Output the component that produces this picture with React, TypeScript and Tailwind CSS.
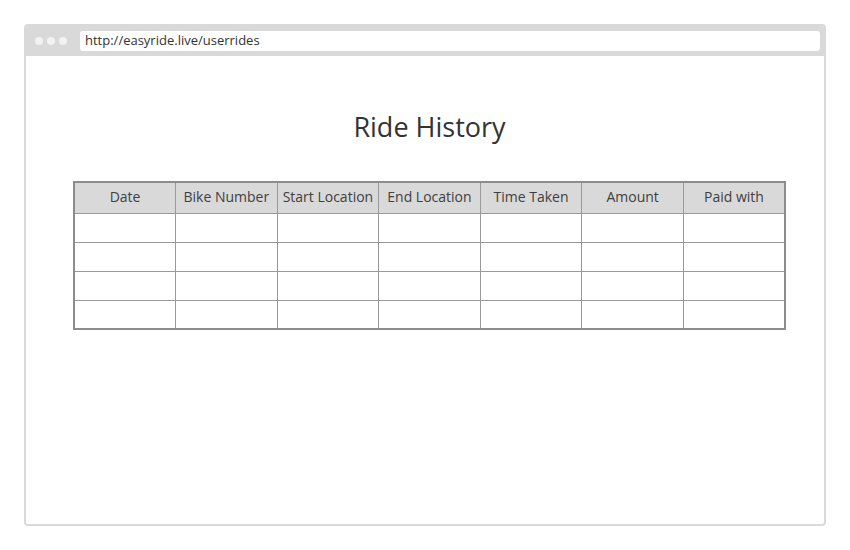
const COLUMNS = ["Date", "Bike Number", "Start Location", "End Location", "Time Taken", "Amount", "Paid with"];
const ROWS = [0, 1, 2, 3];

export default function App() {
  return (
    <div className="w-[850px] h-[550px] bg-white pt-[24px] pl-[24px] font-['Open_Sans','Noto_Sans',sans-serif]">
      {/* Browser frame */}
      <div className="w-[802px] h-[502px] rounded-[4px] border-2 border-[#d9d9d9] bg-white overflow-hidden flex flex-col">
        {/* Top bar */}
        <div className="h-[30px] bg-[#d9d9d9] flex items-center pl-[9px] pr-[4px] gap-[4px]">
          <span className="w-[8px] h-[8px] rounded-full bg-[#f2f2f2]" />
          <span className="w-[8px] h-[8px] rounded-full bg-[#f2f2f2]" />
          <span className="w-[8px] h-[8px] rounded-full bg-[#f2f2f2]" />
          <div className="ml-[9px] flex-1 h-[20px] rounded-[3px] bg-white flex items-center px-[5px] text-[13px] text-[#333]">
            http://easyride.live/userrides
          </div>
        </div>

        {/* Page */}
        <div className="flex-1 flex flex-col pl-[47px] pr-[38px]">
          <h1 className="mt-[52px] text-center text-[27px] leading-[38px] text-[#333]">Ride History</h1>
          <table className="mt-[35px] w-[713px] border-collapse border-2 border-[#8c8c8c] table-fixed">
            <thead>
              <tr className="h-[31px] bg-[#d9d9d9]">
                {COLUMNS.map((c) => (
                  <th key={c} className="border border-[#9a9a9a] font-normal text-[14px] text-[#404040] p-0 pb-[2px] whitespace-nowrap">
                    {c}
                  </th>
                ))}
              </tr>
            </thead>
            <tbody>
              {ROWS.map((r) => (
                <tr key={r} className="h-[29px]">
                  {COLUMNS.map((c) => (
                    <td key={c} className="border border-[#9a9a9a]" />
                  ))}
                </tr>
              ))}
            </tbody>
          </table>
        </div>
      </div>
    </div>
  );
}
